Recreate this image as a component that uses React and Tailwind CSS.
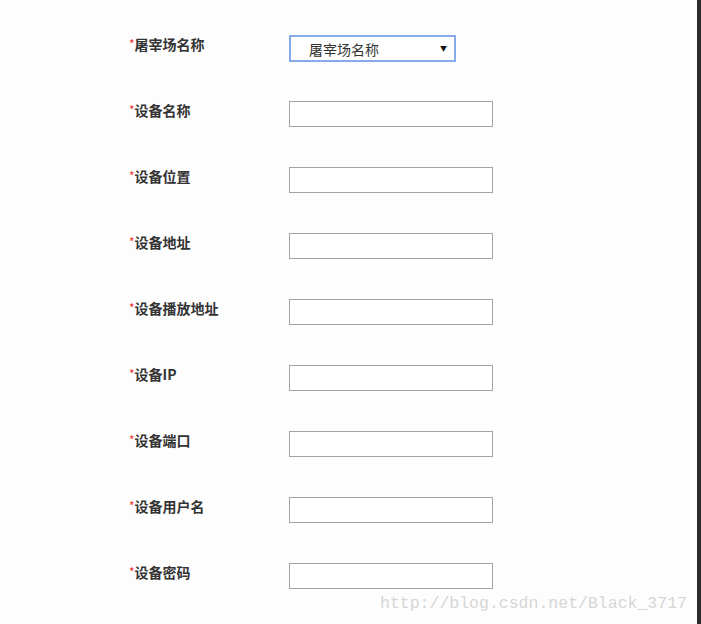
export default function App() {
  const labels = ["设备名称", "设备位置", "设备地址", "设备播放地址", "设备IP", "设备端口", "设备用户名", "设备密码"];
  const font = { fontFamily: '"Noto Sans CJK SC", "Liberation Sans", sans-serif' };
  return (
    <div className="relative flex h-[624px] w-[701px] bg-[#fdfdfd] overflow-hidden" style={font}>
      <div className="flex-1 pl-[129px] pt-[34px]">
        <div className="flex h-[66px] items-start">
          <div className="w-[160px] text-[14px] leading-[20px] font-bold text-[#333]">
            <span className="text-[#e33] text-[12px] font-normal align-top">*</span>屠宰场名称
          </div>
          <div className="mt-px flex h-[27px] w-[167px] items-center justify-between border-2 border-[#86abea] bg-white pl-[18px] pr-[7px] text-[14px] text-[#333]">
            <span className="leading-[20px]">屠宰场名称</span>
            <span className="text-[7px] text-[#111]">▼</span>
          </div>
        </div>
        {labels.map((l) => (
          <div key={l} className="flex h-[66px] items-start">
            <div className="w-[160px] text-[14px] leading-[20px] font-bold text-[#333]">
              <span className="text-[#e33] text-[12px] font-normal align-top">*</span>{l}
            </div>
            <div className="mt-px h-[26px] w-[204px] border border-[#a5a5a5] bg-white"></div>
          </div>
        ))}
      </div>
      <div className="w-[4px] bg-[#2c2c2c]"></div>
      <div
        className="absolute left-[380px] top-[594px] text-[16.5px] leading-[20px] text-[#d6d6d6]"
        style={{ fontFamily: '"Liberation Mono", monospace' }}
      >
        http://blog.csdn.net/Black_3717
      </div>
    </div>
  );
}
